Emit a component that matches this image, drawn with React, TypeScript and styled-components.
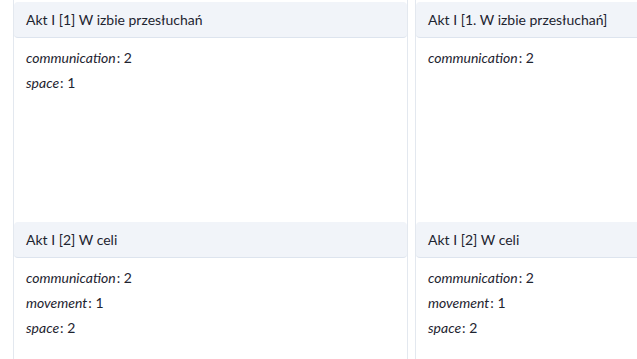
import React from 'react';
import styled, { createGlobalStyle } from 'styled-components';

const GlobalStyle = createGlobalStyle`
  body {
    margin: 0;
    background: #ffffff;
    font-family: Lato, "Noto Sans", sans-serif;
    color: #1e2430;
    overflow: hidden;
  }
`;

const Board = styled.div`
  display: flex;
  gap: 7px;
  padding-left: 13px;
  height: 359px;
  overflow: hidden;
`;

const Column = styled.div`
  flex-shrink: 0;
  width: 393px;
  border-left: 1px solid #e3e8ef;
  border-right: 1px solid #e3e8ef;
  padding-top: 2px;
`;

const Card = styled.div`
  height: 220px;
  display: flex;
  flex-direction: column;
`;

const CardHeader = styled.div`
  display: flex;
  align-items: center;
  height: 35px;
  padding: 0 12px;
  background: #f1f4f9;
  border-bottom: 1px solid #dde4ee;
  border-radius: 4px;
  font-size: 14px;
`;

const CardBody = styled.div`
  padding: 7px 12px;
  font-size: 14px;
`;

const Stat = styled.div`
  height: 25px;
  line-height: 25px;
`;

const Key = styled.i`
  font-style: italic;
  margin-right: 1px;
`;

type Scene = { title: string; stats: [string, number][] };

const columns: Scene[][] = [
  [
    { title: 'Akt I [1] W izbie przesłuchań', stats: [['communication', 2], ['space', 1]] },
    { title: 'Akt I [2] W celi', stats: [['communication', 2], ['movement', 1], ['space', 2]] },
  ],
  [
    { title: 'Akt I [1. W izbie przesłuchań]', stats: [['communication', 2]] },
    { title: 'Akt I [2] W celi', stats: [['communication', 2], ['movement', 1], ['space', 2]] },
  ],
];

export default function App() {
  return (
    <>
      <GlobalStyle />
      <Board>
        {columns.map((scenes, ci) => (
          <Column key={ci}>
            {scenes.map((s, si) => (
              <Card key={si}>
                <CardHeader>{s.title}</CardHeader>
                <CardBody>
                  {s.stats.map(([k, v]) => (
                    <Stat key={k}>
                      <Key>{k}</Key>: {v}
                    </Stat>
                  ))}
                </CardBody>
              </Card>
            ))}
          </Column>
        ))}
      </Board>
    </>
  );
}
